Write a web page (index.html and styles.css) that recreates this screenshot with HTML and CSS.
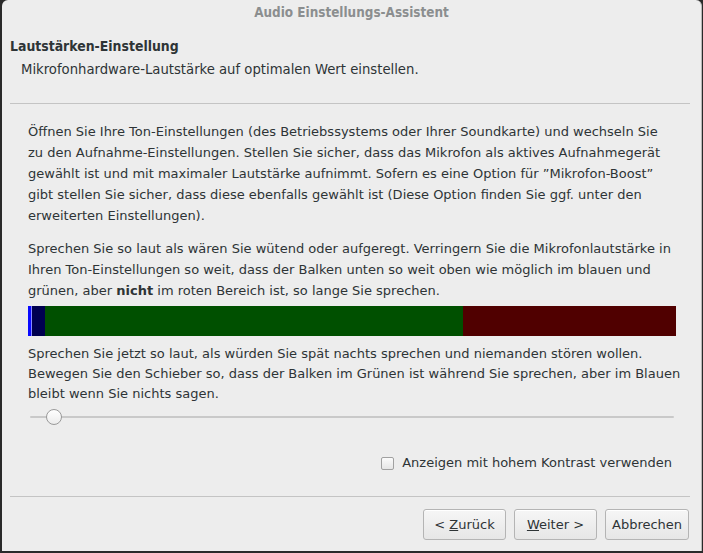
FILE: index.html
```html
<!DOCTYPE html>
<html lang="de">
<head>
<meta charset="utf-8">
<title>Audio Einstellungs-Assistent</title>
<link rel="stylesheet" href="styles.css">
</head>
<body>
<div class="window">
  <div class="titlebar">Audio Einstellungs-Assistent</div>
  <div class="header">
    <div class="h-title">Lautstärken-Einstellung</div>
    <div class="h-sub">Mikrofonhardware-Lautstärke auf optimalen Wert einstellen.</div>
  </div>
  <div class="sep"></div>
  <div class="content">
    <p class="p1">Öffnen Sie Ihre Ton-Einstellungen (des Betriebssystems oder Ihrer Soundkarte) und wechseln Sie<br>zu den Aufnahme-Einstellungen. Stellen Sie sicher, dass das Mikrofon als aktives Aufnahmegerät<br>gewählt ist und mit maximaler Lautstärke aufnimmt. Sofern es eine Option für ”Mikrofon-Boost”<br>gibt stellen Sie sicher, dass diese ebenfalls gewählt ist (Diese Option finden Sie ggf. unter den<br>erweiterten Einstellungen).</p>
    <p class="p2">Sprechen Sie so laut als wären Sie wütend oder aufgeregt. Verringern Sie die Mikrofonlautstärke in<br>Ihren Ton-Einstellungen so weit, dass der Balken unten so weit oben wie möglich im blauen und<br>grünen, aber <b>nicht</b> im roten Bereich ist, so lange Sie sprechen.</p>
    <div class="meter">
      <span class="m-level"></span><span class="m-mark"></span><span class="m-blue"></span><span class="m-green"></span><span class="m-red"></span>
    </div>
    <p class="p3">Sprechen Sie jetzt so laut, als würden Sie spät nachts sprechen und niemanden stören wollen.<br>Bewegen Sie den Schieber so, dass der Balken im Grünen ist während Sie sprechen, aber im Blauen<br>bleibt wenn Sie nichts sagen.</p>
    <div class="slider">
      <div class="track"></div>
      <div class="thumb"></div>
    </div>
    <label class="check"><span class="box"></span>Anzeigen mit hohem Kontrast verwenden</label>
  </div>
  <div class="sep sep2"></div>
  <div class="buttons">
    <button class="btn">&lt; <u>Z</u>urück</button>
    <button class="btn"><u>W</u>eiter &gt;</button>
    <button class="btn btn-wide">Abbrechen</button>
  </div>
</div>
</body>
</html>
```

FILE: styles.css
```css
html, body {
  margin: 0;
  padding: 0;
  background: #2a2a2a;
  width: 703px;
  height: 553px;
  overflow: hidden;
}

.window {
  margin-left: 2px;
  width: 699px;
  height: 551px;
  background: #ededed;
  border-right: 1px solid #b9b9b9;
  border-radius: 6px 6px 0 0;
  font-family: "DejaVu Sans", sans-serif;
  font-size: 13px;
  color: #2e3436;
  display: flex;
  flex-direction: column;
}

.titlebar {
  height: 26px;
  flex: none;
  line-height: 26px;
  text-align: center;
  font-family: "DejaVu Sans Condensed", "DejaVu Sans", sans-serif;
  font-weight: bold;
  font-size: 13.4px;
  color: #8b8e8f;
}

.header {
  flex: none;
  padding: 8px 0 0 8px;
  height: 69px;
  box-sizing: border-box;
  font-family: "DejaVu Sans Condensed", "DejaVu Sans", sans-serif;
}

.h-title {
  font-weight: bold;
  font-size: 13.9px;
  line-height: 24px;
}

.h-sub {
  font-size: 14.7px;
  line-height: 22px;
  padding-left: 11px;
}

.sep {
  flex: none;
  height: 1px;
  background: #c4c4c4;
  margin: 8px 11px 0 8px;
}

.content {
  flex: none;
  padding: 17px 0 0 26px;
  height: 392px;
  box-sizing: border-box;
}

.content p {
  margin: 0;
  line-height: 21px;
}

.p2 {
  margin-top: 12px !important;
}

.p3 {
  margin-top: 8px !important;
  line-height: 20px !important;
}

.meter {
  display: flex;
  margin-top: 5px;
  height: 30px;
  width: 648px;
}

.m-level { width: 3px; background: #0a0aff; }
.m-mark { width: 1px; background: #8a8aff; }
.m-blue { width: 13px; background: #000050; }
.m-green { width: 418px; background: #005000; }
.m-red { flex: 1; background: #500000; }

.slider {
  position: relative;
  height: 26px;
  width: 644px;
  margin-left: 2px;
}

.track {
  position: absolute;
  left: 0;
  right: 0;
  top: 12px;
  height: 2px;
  background: #c9c9c9;
  border-radius: 1px;
}

.thumb {
  position: absolute;
  left: 16px;
  top: 5px;
  width: 14px;
  height: 14px;
  border-radius: 50%;
  border: 1px solid #9a9a9a;
  background: linear-gradient(#ffffff, #ececec);
}

.check {
  display: flex;
  align-items: center;
  justify-content: flex-end;
  margin-top: 23px;
  margin-right: 29px;
  line-height: 20px;
}

.box {
  width: 11px;
  height: 11px;
  border: 1px solid #a1a1a1;
  border-radius: 2px;
  background: linear-gradient(#fbfbfb, #e6e6e6);
  margin-right: 8px;
}

.sep2 {
  margin-top: 0;
}

.buttons {
  display: flex;
  justify-content: flex-end;
  gap: 8px;
  padding: 12px 12px 0 0;
}

.btn {
  width: 83px;
  height: 31px;
  padding: 0 6px;
  font-family: "DejaVu Sans", sans-serif;
  font-size: 13px;
  color: #2e3436;
  border: 1px solid #b4b4b4;
  border-radius: 3px;
  background: linear-gradient(#f6f6f6, #e6e6e6);
  box-shadow: inset 0 1px #fff;
}

.btn-wide { width: 84px; }
```
